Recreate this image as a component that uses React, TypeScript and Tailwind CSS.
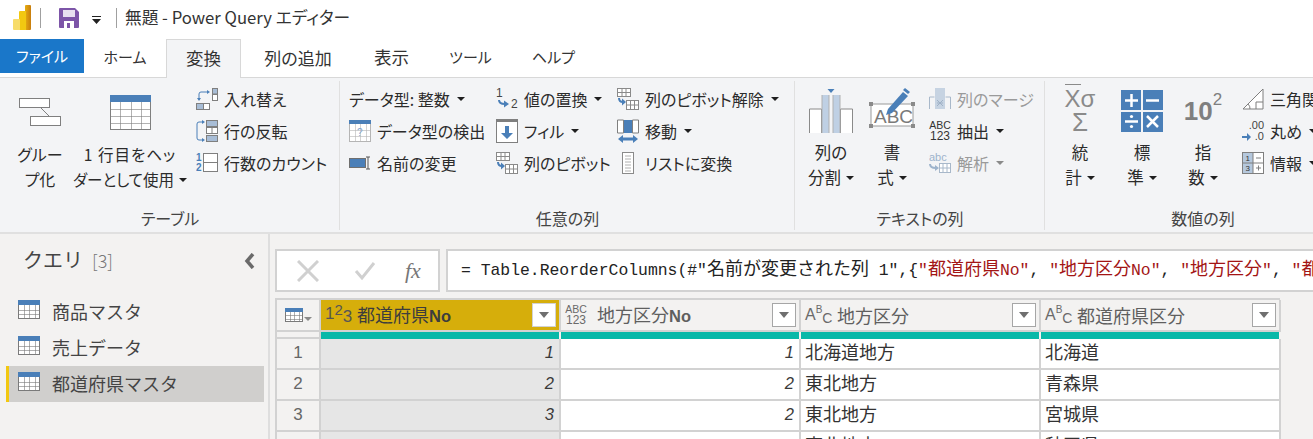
import React from "react";

const palt = "[font-feature-settings:'palt']";

function Caret({ light = false }: { light?: boolean }) {
  return (
    <svg width="8" height="4" viewBox="0 0 8 4" className="shrink-0">
      <path d="M0 0h8L4 4z" fill={light ? "#8a8a8a" : "#1f1f1f"} />
    </svg>
  );
}

function Small({
  icon,
  label,
  caret,
  dim,
}: {
  icon?: React.ReactNode;
  label: string;
  caret?: boolean;
  dim?: boolean;
}) {
  return (
    <div className={`flex h-[32px] items-center whitespace-nowrap ${dim ? "text-[#9a9a9a]" : "text-[#2b2b2b]"}`}>
      {icon && <span className="flex h-[24px] w-[22px] shrink-0 items-center justify-center">{icon}</span>}
      <span className={icon ? "ml-[6px]" : ""}>{label}</span>
      {caret && <span className="ml-[7px] flex"><Caret light={dim} /></span>}
    </div>
  );
}

function Large({
  icon,
  lines,
  caret,
  width,
  text = "",
  first = "",
}: {
  icon: React.ReactNode;
  lines: [string, string];
  caret?: boolean;
  width: string;
  text?: string;
  first?: string;
}) {
  return (
    <div className={`flex shrink-0 flex-col items-center ${width}`}>
      <div className="flex h-[64px] items-center justify-center pt-[4px]">{icon}</div>
      <div className={`whitespace-nowrap text-center leading-[25px] text-[#2b2b2b] ${text}`}>
        <div className={first}>{lines[0]}</div>
        <div className="flex items-center justify-center gap-[5px]">
          {lines[1]}
          {caret && <Caret />}
        </div>
      </div>
    </div>
  );
}

function Group({ label, width, children }: { label: string; width: string; children: React.ReactNode }) {
  return (
    <div className={`relative flex h-full shrink-0 flex-col ${width}`}>
      <div className="flex h-[128px] items-start">{children}</div>
      <div className="mt-[2px] text-center text-[16px] leading-[20px] text-[#444]">{label}</div>
      <div className="absolute right-0 top-[3px] h-[149px] w-px bg-[#e0e0e0]" />
    </div>
  );
}

function GridIcon({
  w = 22,
  h = 20,
  stroke = "#7a7a7a",
  head = "#4a7fb8",
  rows = 3,
  headH = 0.25,
  children,
}: {
  w?: number;
  h?: number;
  stroke?: string;
  head?: string;
  rows?: number;
  headH?: number;
  children?: React.ReactNode;
}) {
  const col = [1, 2, 3].map((i) => Math.round((i * w) / 4) + 0.5);
  const top = Math.round(h * headH);
  const row = Array.from({ length: rows - 1 }, (_, i) => Math.round(top + ((i + 1) * (h - top)) / rows) + 0.5);
  return (
    <svg width={w} height={h} viewBox={`0 0 ${w} ${h}`}>
      <rect x="0.5" y="0.5" width={w - 1} height={h - 1} fill="#fff" stroke={stroke} />
      {col.map((x) => <path key={x} d={`M${x} 0V${h}`} stroke={stroke} strokeOpacity=".6" />)}
      {row.map((y) => <path key={y} d={`M0 ${y}H${w}`} stroke={stroke} strokeOpacity=".6" />)}
      <rect x="0" y="0" width={w} height={top} fill={head} />
      {children}
    </svg>
  );
}

function PivotIcon() {
  const c = "#4a7fb8";
  return (
    <svg width="22" height="22" viewBox="0 0 22 22">
      <rect x=".5" y=".5" width="13" height="8" fill="#fff" stroke="#8a8a8a" />
      <path d="M5 .5v8M9 .5v8M.5 4.5h13" stroke="#8a8a8a" />
      <rect x="9.5" y="12.500" width="12" height="9" fill="#fff" stroke="#8a8a8a" />
      <path d="M13.500 12.500v9M17.500 12.500v9M9.500 17h12" stroke="#8a8a8a" />
      <path d="M2 10c0 3 2 4 4 4" fill="none" stroke={c} strokeWidth="2" />
      <path d="M5 10.500l4 3.500-4 3.500z" fill={c} />
    </svg>
  );
}

function FilterButton({ active }: { active?: boolean }) {
  return (
    <span className={`flex h-[24px] w-[24px] shrink-0 items-center justify-center border bg-white ${active ? "border-[#d2d2d2]" : "border-[#a6a6a6]"}`}>
      <svg width="10" height="6" viewBox="0 0 10 6"><path d="M0 0h10L5 6z" fill="#6f6f6f" /></svg>
    </span>
  );
}

function TypeAbc() {
  return (
    <span className="mr-[10px] flex w-[22px] shrink-0 items-start font-['Liberation_Sans',sans-serif] text-[#6a6a6a]">
      <span className="mt-[1px] text-[16px] leading-none">A</span>
      <span className="-mt-[1px] text-[10px] leading-none">B</span>
      <span className="mt-[5px] text-[14px] leading-none">C</span>
    </span>
  );
}

function TypeAny() {
  return (
    <span className="mr-[10px] flex w-[22px] shrink-0 flex-col items-center font-['Liberation_Sans',sans-serif] text-[10.5px] leading-[11px] text-[#6a6a6a]">
      <span>ABC</span>
      <span className="text-[12px]">123</span>
    </span>
  );
}

function HeaderCell({ name, suffix, icon }: { name: string; suffix?: string; icon: React.ReactNode }) {
  return (
    <div className="flex h-[32px] items-center border-b-2 border-r-2 border-[#d2d2d2] bg-[#f3f2f1] pl-[4px] pr-[3px]">
      {icon}
      <span className="flex-1 whitespace-nowrap text-[18px] text-[#5f5f5f]">
        {name}
        {suffix && <b className="font-['Liberation_Sans',sans-serif] text-[16.5px]">{suffix}</b>}
      </span>
      <FilterButton />
    </div>
  );
}

const rows = [
  ["1", "1", "1", "北海道地方", "北海道"],
  ["2", "2", "2", "東北地方", "青森県"],
  ["3", "3", "2", "東北地方", "宮城県"],
  ["4", "4", "2", "東北地方", "秋田県"],
];

const numCell = "flex h-[31px] items-center justify-end border-b-2 border-r-2 border-[#d2d2d2] pb-[3px] pr-[5px] font-['Liberation_Sans',sans-serif] text-[16.5px] italic text-[#3a3a3a]";
const textCell = "flex h-[31px] items-center border-b-2 border-r-2 border-[#d2d2d2] bg-white pb-[4px] pl-[4px] text-[18px] text-[#333]";
const cjk = "text-[18px]";

export default function App() {
  return (
    <div className="h-[439px] w-[1313px] overflow-hidden bg-white font-['Noto_Sans_CJK_JP','Noto_Sans',sans-serif] text-[16px]">
      {/* title bar */}
      <div className={`flex h-[39px] items-center ${palt}`}>
        <svg width="18" height="25" viewBox="0 0 18 25" className="mb-[4px] ml-[13px]">
          <defs>
            <linearGradient id="pb" x1="0" x2="1"><stop offset="0" stopColor="#e6ad10" /><stop offset="1" stopColor="#c87d0e" /></linearGradient>
          </defs>
          <rect x="12" y="0" width="6" height="25" rx="1" fill="url(#pb)" />
          <rect x="6" y="6" width="7" height="19" rx="1" fill="#f2c811" />
          <rect x="0" y="14" width="7" height="11" rx="1" fill="#f7dc6a" />
        </svg>
        <div className="mb-[4px] ml-[9px] h-[20px] w-px bg-[#a0a0a0]" />
        <svg width="20" height="20" viewBox="0 0 20 20" className="mb-[4px] ml-[18px]">
          <path d="M1 0h15l4 4v15a1 1 0 0 1-1 1H1a1 1 0 0 1-1-1V1a1 1 0 0 1 1-1z" fill="#7d55a8" />
          <rect x="4" y="2" width="12" height="7" fill="#e8e0f0" />
          <rect x="5" y="13" width="10" height="7" fill="#fff" />
          <rect x="8" y="15" width="3" height="5" fill="#7d55a8" />
        </svg>
        <svg width="9" height="8" viewBox="0 0 9 8" className="ml-[13px] mt-[1px]">
          <path d="M0 0h9v1H0zM0 3h9L4.500 8z" fill="#222" />
        </svg>
        <div className="mb-[4px] ml-[15px] h-[20px] w-px bg-[#a0a0a0]" />
        <span className="mb-[4px] ml-[8px] text-[16.7px] text-[#333]">無題 - Power Query エディター</span>
      </div>

      {/* tabs */}
      <div className={`flex h-[39px] items-start border-b border-[#d8d8d8] text-[#333] ${palt}`}>
        <div className="flex h-[34px] w-[84px] items-center justify-center bg-[#1a77c9] text-[15px] text-white">ファイル</div>
        <div className="flex h-[34px] w-[82px] items-center justify-center pt-[3px] text-[15px]">ホーム</div>
        <div className="z-10 flex h-[39px] w-[75px] items-start justify-center border border-b-0 border-[#d8d8d8] bg-[#f3f4f6] pt-[5px] text-[17.5px]">変換</div>
        <div className="flex h-[34px] w-[114px] items-center justify-center pt-[3px] text-[17px]">列の追加</div>
        <div className="flex h-[34px] w-[73px] items-center justify-center pt-[3px] text-[17.5px]">表示</div>
        <div className="flex h-[34px] w-[85px] items-center justify-center pt-[3px] text-[15px]">ツール</div>
        <div className="flex h-[34px] w-[81px] items-center justify-center pt-[3px] text-[15px]">ヘルプ</div>
      </div>

      {/* ribbon */}
      <div className={`flex h-[156px] border-b-2 border-[#e0e0e0] bg-[#f3f4f6] ${palt}`}>
        <Group label="テーブル" width="w-[340px]">
          <Large
            width="w-[80px]"
            lines={["グルー", "プ化"]}
            icon={
              <svg width="42" height="28" viewBox="0 0 42 28">
                <rect x=".5" y=".5" width="30" height="9" fill="#fff" stroke="#7f7f7f" />
                <rect x="11.5" y="18.5" width="30" height="9" fill="#fff" stroke="#7f7f7f" />
                <path d="M22 10l8 8" stroke="#7f7f7f" />
              </svg>
            }
          />
          <Large
            width="w-[100px] mr-[16px]"
            lines={["1 行目をヘッ", "ダーとして使用"]}
            first="tracking-[1px]"
            text="text-[15.5px]"
            caret
            icon={<GridIcon w={41} h={35} stroke="#7f7f7f" rows={4} headH={0.2} />}
          />
          <div className="pt-[5px]">
            <Small
              label="入れ替え"
              icon={
                <svg width="22" height="22" viewBox="0 0 22 22">
                  <rect x="16.5" y=".5" width="5" height="5.5" fill="#a8bdd6" stroke="#7f7f7f" />
                  <rect x="16.5" y="6.5" width="5" height="6" fill="#fff" stroke="#7f7f7f" />
                  <rect x=".5" y="15.5" width="7" height="6" fill="#a8bdd6" stroke="#7f7f7f" />
                  <rect x="7.5" y="15.5" width="6" height="6" fill="#fff" stroke="#7f7f7f" />
                  <path d="M3 12V6a2 2 0 0 1 2-2h7" fill="none" stroke="#4a7fb8" />
                  <path d="M11 2l3 2-3 2zM1 10l2 3 2-3z" fill="#4a7fb8" />
                </svg>
              }
            />
            <Small
              label="行の反転"
              icon={
                <svg width="22" height="22" viewBox="0 0 22 22">
                  <rect x="10.5" y=".5" width="11" height="6" fill="#a8bdd6" stroke="#7f7f7f" />
                  <rect x="10.5" y="7.5" width="11" height="6" fill="#fff" stroke="#7f7f7f" />
                  <path d="M16 7.5v6" stroke="#7f7f7f" />
                  <rect x="10.5" y="15.5" width="11" height="6" fill="#a8bdd6" stroke="#7f7f7f" />
                  <path d="M7 2H3a2 2 0 0 0-2 2v14a2 2 0 0 0 2 2h4" fill="none" stroke="#4a7fb8" />
                  <path d="M6 0l3 2-3 2zM6 18l3 2-3 2z" fill="#4a7fb8" />
                </svg>
              }
            />
            <Small
              label="行数のカウント"
              icon={
                <svg width="22" height="22" viewBox="0 0 22 22">
                  <rect x="7.5" y="1.5" width="14" height="18" fill="#fff" stroke="#7f7f7f" />
                  <path d="M7.500 10.500h14" stroke="#7f7f7f" />
                  <text x="0" y="9" fontSize="10" fontWeight="700" fill="#4a7fb8" fontFamily="Liberation Sans">1</text>
                  <text x="0" y="19" fontSize="10" fontWeight="700" fill="#4a7fb8" fontFamily="Liberation Sans">2</text>
                </svg>
              }
            />
          </div>
        </Group>

        <Group label="任意の列" width="w-[455px]">
          <div className="w-[156px] pl-[9px] pt-[5px]">
            <Small label="データ型: 整数" caret />
            <Small
              label="データ型の検出"
              icon={
                <GridIcon w={22} h={22} stroke="#b5b5b5" rows={3} headH={0.2}>
                  <text x="8" y="16" fontSize="10" fill="#7fa5cf" fontFamily="Liberation Sans">?</text>
                </GridIcon>
              }
            />
            <Small
              label="名前の変更"
              icon={
                <svg width="22" height="14" viewBox="0 0 22 14">
                  <rect x=".5" y="2.5" width="16" height="9" fill="#4a7fb8" stroke="#6f6f6f" />
                  <path d="M17 1h4M17 13h4M19 1v12" stroke="#555" fill="none" />
                </svg>
              }
            />
          </div>
          <div className="w-[121px] pt-[5px]">
            <Small
              label="値の置換"
              caret
              icon={
                <svg width="22" height="22" viewBox="0 0 22 22">
                  <text x="0" y="9" fontSize="12" fill="#444" fontFamily="Liberation Sans">1</text>
                  <text x="15" y="20" fontSize="12" fill="#444" fontFamily="Liberation Sans">2</text>
                  <path d="M3 12c0 3 2 4 6 4" fill="none" stroke="#4a7fb8" strokeWidth="2" />
                  <path d="M8 12.500l5 3.500-5 3.500z" fill="#4a7fb8" />
                </svg>
              }
            />
            <Small
              label="フィル"
              caret
              icon={
                <svg width="22" height="24" viewBox="0 0 22 24">
                  <rect x=".5" y=".5" width="21" height="23" fill="#fff" stroke="#7f7f7f" />
                  <rect x="0" y="0" width="22" height="3" fill="#7f7f7f" />
                  <path d="M9 7h4v7h4l-6 6-6-6h4z" fill="#4a7fb8" />
                </svg>
              }
            />
            <Small label="列のピボット" icon={<PivotIcon />} />
          </div>
          <div className="pt-[5px]">
            <Small label="列のピボット解除" caret icon={<PivotIcon />} />
            <Small
              label="移動"
              caret
              icon={
                <svg width="22" height="24" viewBox="0 0 22 24">
                  <path d="M.5 1v13h6V1zM15.500 1v13h6V1z" fill="#fff" stroke="#7f7f7f" />
                  <rect x="7" y="1" width="8" height="13" fill="#4a7fb8" />
                  <path d="M1 20l5-4v2.500h10V16l5 4-5 4v-2.500H6V24z" fill="#4a7fb8" />
                </svg>
              }
            />
            <Small
              label="リストに変換"
              icon={
                <svg width="12" height="22" viewBox="0 0 12 22">
                  <rect x=".5" y=".5" width="11" height="21" fill="#fff" stroke="#8a8a8a" />
                  <path d="M3 4h6M3 7h6M3 10h6M3 13h6M3 16h6M3 19h6" stroke="#b0b0b0" />
                </svg>
              }
            />
          </div>
        </Group>

        <Group label="テキストの列" width="w-[250px]">
          <Large
            width="w-[70px] ml-[1px] -mt-[2px]"
            lines={["列の", "分割"]}
            text="text-[16.5px]"
            caret
            icon={
              <svg width="44" height="44" viewBox="0 0 44 44" className="mt-[2px]">
                <path d="M.5 44V20h12v24M31.500 44V20h12v24" fill="#fff" stroke="#8a8a8a" />
                <rect x="13" y="6" width="7" height="38" fill="#bfd0e4" />
                <rect x="24" y="6" width="7" height="38" fill="#bfd0e4" />
                <path d="M20 6v38M24 6v38M13 6v38M31 6v38" stroke="#b0b0b0" />
                <path d="M18.500 0h7L22 4z" fill="#4a7fb8" />
              </svg>
            }
          />
          <Large
            width="w-[52px] -mt-[2px]"
            lines={["書", "式"]}
            text="text-[16.5px]"
            caret
            icon={
              <svg width="46" height="40" viewBox="0 0 46 40" className="-mt-[4px]">
                <rect x="2" y="16" width="42" height="22" fill="#fff" stroke="#9a9a9a" />
                <path d="M0 14h4v4H0zM42 14h4v4h-4zM0 36h4v4H0zM42 36h4v4h-4z" fill="#8a8a8a" />
                <text x="5" y="35" fontSize="19" fill="#7a7a7a" fontFamily="Liberation Sans">ABC</text>
                <path d="M34 4l5 4-16 17-6 2 2-6z" fill="#4a7fb8" />
                <path d="M36 0l5 4-2 2-5-4z" fill="#4a7fb8" />
              </svg>
            }
          />
          <div className="pl-[11px] pt-[5px]">
            <Small
              dim
              label="列のマージ"
              icon={
                <svg width="22" height="22" viewBox="0 0 22 22">
                  <path d="M.5 21V9h5M21.500 21V9h-5" fill="none" stroke="#a8b8ca" />
                  <rect x="6" y="0" width="10" height="21" fill="#c6d3e2" />
                  <path d="M8 15h6M8 12l3 3-3 3M14 12l-3 3 3 3" stroke="#9fb1c6" fill="none" />
                </svg>
              }
            />
            <Small
              label="抽出"
              caret
              icon={
                <span className="flex flex-col items-center font-['Liberation_Sans',sans-serif] text-[10.5px] leading-[11px] text-[#333]">
                  <span>ABC</span>
                  <span className="text-[12px]">123</span>
                </span>
              }
            />
            <Small
              dim
              label="解析"
              caret
              icon={
                <svg width="22" height="20" viewBox="0 0 22 20">
                  <text x="0" y="8" fontSize="11" fill="#9db3cc" fontFamily="Liberation Sans">abc</text>
                  <rect x="10.5" y="10.5" width="11" height="9" fill="#fff" stroke="#a8b8ca" />
                  <path d="M14 10.500v9M18 10.500v9M10.500 15h11" stroke="#a8b8ca" />
                  <path d="M1 11c0 3 3 4 6 4" fill="none" stroke="#9db3cc" strokeWidth="2" />
                  <path d="M6 12l4 3-4 3z" fill="#9db3cc" />
                </svg>
              }
            />
          </div>
        </Group>

        <Group label="数値の列" width="w-[316px]">
          <Large
            width="w-[62px] ml-[4px] -mt-[2px]"
            lines={["統", "計"]}
            text="text-[16.5px]"
            caret
            icon={
              <div className="mt-[2px] flex flex-col items-center font-['Liberation_Sans',sans-serif] text-[#8a8a8a]">
                <div className="text-[24px] leading-[22px]"><span className="border-t-[1.5px] border-[#8a8a8a]">X</span>σ</div>
                <div className="text-[26px] leading-[24px]">Σ</div>
              </div>
            }
          />
          <Large
            width="w-[62px] -mt-[2px]"
            lines={["標", "準"]}
            text="text-[16.5px]"
            caret
            icon={
              <svg width="42" height="42" viewBox="0 0 42 42" className="mt-[2px]">
                <rect width="42" height="42" fill="#4a7fb8" />
                <path d="M21 0v42M0 21h42" stroke="#f3f4f6" strokeWidth="2" />
                <path d="M4 10.500h13M10.500 4v13M25 10.500h13M4 31.500h13M26 26l11 11M37 26L26 37" stroke="#fff" strokeWidth="2.500" fill="none" />
                <circle cx="10.500" cy="26.500" r="1.600" fill="#fff" /><circle cx="10.500" cy="36.500" r="1.600" fill="#fff" />
              </svg>
            }
          />
          <Large
            width="w-[60px] -mt-[2px]"
            lines={["指", "数"]}
            text="text-[16.5px]"
            caret
            icon={
              <div className="mt-[2px] flex items-start font-['Liberation_Sans',sans-serif] font-bold text-[#7f7f7f]">
                <span className="text-[26px] leading-[28px]">10</span>
                <span className="-mt-[7px] text-[17px] font-normal leading-[20px]">2</span>
              </div>
            }
          />
          <div className="pl-[9px] pt-[5px]">
            <Small
              label="三角関数"
              icon={
                <svg width="22" height="22" viewBox="0 0 22 22">
                  <path d="M1 21L21 1v20z" fill="#fff" stroke="#7f7f7f" />
                  <path d="M14 21v-7h7" fill="none" stroke="#7f7f7f" />
                  <path d="M6 16a6 6 0 0 1 2 5" fill="none" stroke="#7f7f7f" />
                </svg>
              }
            />
            <Small
              label="丸め"
              caret
              icon={
                <span className="relative flex h-[22px] w-[22px] flex-col items-end font-['Liberation_Sans',sans-serif] text-[11px] leading-[11px] text-[#444]">
                  <span>.00</span>
                  <span>.0</span>
                  <svg width="10" height="8" viewBox="0 0 10 8" className="absolute bottom-[1px] left-0"><path d="M0 4h6" stroke="#4a7fb8" strokeWidth="2" /><path d="M5 0l4 4-4 4z" fill="#4a7fb8" /></svg>
                </span>
              }
            />
            <Small
              label="情報"
              caret
              icon={
                <svg width="22" height="22" viewBox="0 0 22 22">
                  <rect x=".5" y=".5" width="21" height="21" fill="#fff" stroke="#7f7f7f" />
                  <rect x="1" y="1" width="10" height="20" fill="#b5c8dd" />
                  <path d="M11 .5v21M.5 11h21M14 6h5M14 16h5M16.500 13.500v5" stroke="#7f7f7f" />
                  <text x="3.500" y="9" fontSize="8" fill="#333" fontFamily="Liberation Sans">1</text>
                  <text x="3.500" y="19" fontSize="8" fill="#333" fontFamily="Liberation Sans">3</text>
                </svg>
              }
            />
          </div>
        </Group>
      </div>

      {/* lower pane */}
      <div className="flex h-[205px] bg-[#f3f2f1]">
        <aside className="w-[270px] shrink-0 border-r-2 border-[#dedede]">
          <div className="flex h-[60px] items-center pb-[9px] pl-[23px] pr-[12px]">
            <span className="flex-1 whitespace-nowrap text-[20px] text-[#444]">
              クエリ<span className="ml-[9px] text-[18px] font-light text-[#777]">[3]</span>
            </span>
            <svg width="12" height="16" viewBox="0 0 12 16" className="mt-[3px]"><path d="M9 1L3 8l6 7" fill="none" stroke="#6a6a6a" strokeWidth="3.500" /></svg>
          </div>
          {["商品マスタ", "売上データ", "都道府県マスタ"].map((name, i) => (
            <div
              key={name}
              className={`ml-[6px] flex h-[36px] w-[258px] items-center border-l-[3px] pl-[9px] text-[18px] text-[#444] ${i === 2 ? "border-[#f2c811] bg-[#d0cfcd]" : "border-transparent"}`}
            >
              <span className="mb-[5px] flex"><GridIcon w={22} h={19} stroke="#7a7a7a" /></span>
              <span className="mb-[2px] ml-[12px]">{name}</span>
            </div>
          ))}
        </aside>

        <main className="min-w-0 flex-1 pl-[5px] pt-[15px]">
          {/* formula bar */}
          <div className="flex h-[43px] gap-[6px]">
            <div className="flex w-[165px] shrink-0 items-center border-2 border-[#d2d2d2] bg-white">
              <svg width="22" height="22" viewBox="0 0 22 22" className="ml-[20px]"><path d="M1 1l20 20M21 1L1 21" stroke="#d0d0d0" strokeWidth="3" /></svg>
              <svg width="22" height="20" viewBox="0 0 22 20" className="ml-[35px]"><path d="M2 10l6 7L20 2" fill="none" stroke="#d0d0d0" strokeWidth="3" /></svg>
              <span className="ml-[29px] font-['Liberation_Serif',serif] text-[22px] italic text-[#777]">fx</span>
            </div>
            <div className="flex min-w-0 flex-1 items-center overflow-hidden border-2 border-r-0 border-[#d2d2d2] bg-white pl-[13px]">
              <p className="whitespace-pre font-['Liberation_Mono','Noto_Sans_CJK_JP',monospace] text-[16.4px] text-[#222]">
                {'= Table.ReorderColumns(#"'}
                <span className={cjk}>名前が変更された列</span>
                {' 1",{'}
                <span className="text-[#a31515]">"<span className={cjk}>都道府県</span>No"</span>
                {", "}
                <span className="text-[#a31515]">"<span className={cjk}>地方区分</span>No"</span>
                {", "}
                <span className="text-[#a31515]">"<span className={cjk}>地方区分</span>"</span>
                {", "}
                <span className="text-[#a31515]">"<span className={cjk}>都道府県区分</span>"</span>
              </p>
            </div>
          </div>

          {/* data table */}
          <div className="mt-[6px] grid w-[1005px] grid-cols-[44px_240px_240px_240px_240px] border-l-2 border-t-2 border-[#d2d2d2]">
            <div className="flex h-[32px] items-center justify-center border-b-2 border-r-2 border-[#d2d2d2] bg-[#f3f2f1]">
              <GridIcon w={18} h={14} stroke="#7a7a7a" />
              <span className="ml-[1px] mt-[8px]"><Caret light /></span>
            </div>
            <div className="flex h-[32px] items-center border-b-2 border-r-2 border-[#d2d2d2] bg-[#d6ae0b] pl-[4px] pr-[3px]">
              <span className="mr-[5px] flex w-[27px] shrink-0 items-start font-['Liberation_Sans',sans-serif] text-[#555]">
                <span className="text-[17px] leading-none">1</span>
                <span className="-mt-[3px] text-[15px] leading-none">2</span>
                <span className="mt-[3px] text-[17px] leading-none">3</span>
              </span>
              <span className="flex-1 whitespace-nowrap text-[18px] text-[#3d3d3d]">
                都道府県<b className="font-['Liberation_Sans',sans-serif] text-[16.5px]">No</b>
              </span>
              <FilterButton active />
            </div>
            <HeaderCell name="地方区分" suffix="No" icon={<TypeAny />} />
            <HeaderCell name="地方区分" icon={<TypeAbc />} />
            <HeaderCell name="都道府県区分" icon={<TypeAbc />} />

            <div className="h-[7px] border-b-2 border-r-2 border-[#d2d2d2] bg-[#f3f2f1]" />
            {[0, 1, 2, 3].map((i) => (
              <div key={i} className="h-[7px] border-r-2 border-[#f3f2f1] bg-[#08b8a8]" />
            ))}

            {rows.map((r) => (
              <React.Fragment key={r[0]}>
                <div className="flex h-[31px] items-center justify-center border-b-2 border-r-2 border-[#d2d2d2] bg-[#f3f2f1] pb-[2px] font-['Liberation_Sans',sans-serif] text-[17px] text-[#666]">
                  {r[0]}
                </div>
                <div className={`${numCell} bg-[#e6e6e6]`}>{r[1]}</div>
                <div className={`${numCell} bg-white`}>{r[2]}</div>
                <div className={textCell}>{r[3]}</div>
                <div className={textCell}>{r[4]}</div>
              </React.Fragment>
            ))}
          </div>
        </main>
      </div>
    </div>
  );
}
